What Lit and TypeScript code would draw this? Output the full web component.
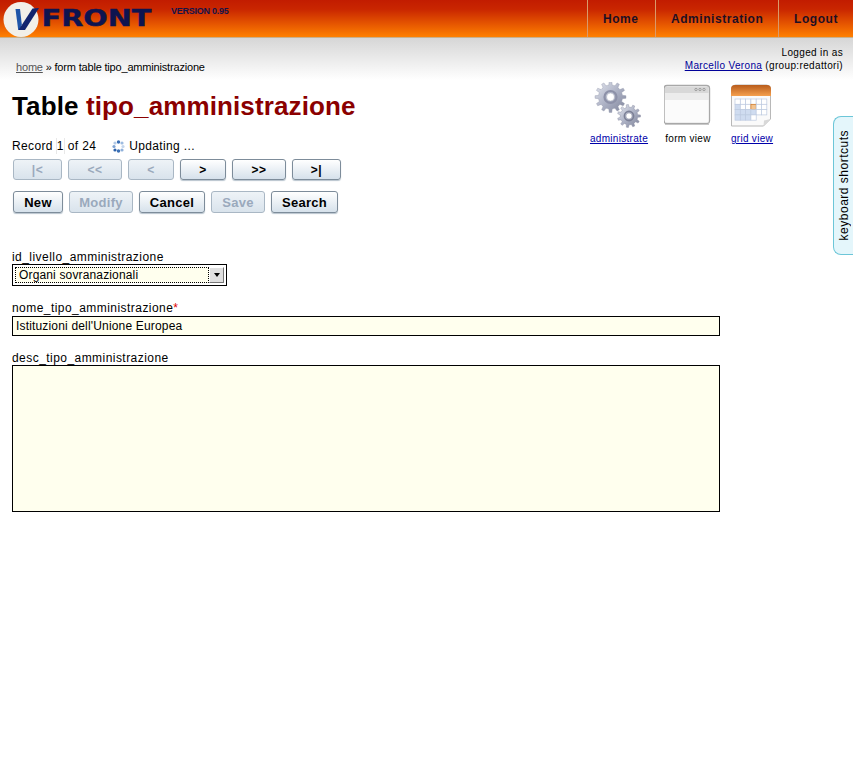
import { LitElement, html, css, svg } from "lit";
import { customElement } from "lit/decorators.js";

function gearPath(cx: number, cy: number, ro: number, ri: number, teeth: number, hole: number) {
  let d = "";
  const step = (Math.PI * 2) / teeth;
  for (let i = 0; i < teeth; i++) {
    const a = i * step;
    const pts: [number, number][] = [
      [ri, a - step * 0.5], [ri, a - step * 0.27], [ro, a - step * 0.16], [ro, a + step * 0.16], [ri, a + step * 0.27],
    ];
    for (const [r, t] of pts) {
      d += `${d ? "L" : "M"}${(cx + r * Math.cos(t)).toFixed(2)} ${(cy + r * Math.sin(t)).toFixed(2)}`;
    }
  }
  d += `Z M${cx - hole} ${cy}a${hole} ${hole} 0 1 0 ${hole * 2} 0a${hole} ${hole} 0 1 0 ${-hole * 2} 0Z`;
  return d;
}

@customElement("app-root")
export class AppRoot extends LitElement {
  static styles = css`
    :host {
      display: block;
      position: relative;
      width: 853px;
      min-height: 784px;
      background: #fff;
      font-family: "Liberation Sans", Arial, sans-serif;
      font-size: 12px;
      color: #000;
      overflow: hidden;
    }
    .hdr {
      height: 37px;
      border-bottom: 1px solid #c9b08c;
      background: linear-gradient(#c21c00, #c92600 25%, #ff8000);
      display: flex;
      align-items: stretch;
    }
    .logo { flex: none; width: 160px; height: 37px; display: block; }
    .ver {
      flex: 1;
      padding: 6px 0 0 11px;
      font-size: 9px;
      line-height: 11px;
      font-weight: bold;
      letter-spacing: -0.25px;
      color: #14144a;
    }
    .nav { display: flex; }
    .nav a {
      display: flex;
      align-items: center;
      border-left: 1px solid #d99a6a;
      font-size: 12px;
      font-weight: bold;
      letter-spacing: 0.55px;
      color: #1e0f24;
      padding: 0 15px;
      white-space: nowrap;
    }
    .nav a.h { width: 37px; }
    .nav a.ad { width: 92px; }
    .nav a.lo { width: 45px; padding-right: 14px; }
    .page {
      background: linear-gradient(#d6d6d6, #fff) top / 100% 42px no-repeat;
    }
    .sub {
      height: 44px;
      box-sizing: border-box;
      padding: 8px 10px 0 16px;
      display: flex;
      justify-content: space-between;
      align-items: flex-start;
    }
    .crumb { margin-top: 15px; font-size: 11px; line-height: 13px; letter-spacing: -0.18px; }
    .crumb a { color: #555; text-decoration: underline; }
    .who { text-align: right; font-size: 10px; line-height: 13px; letter-spacing: 0.35px; }
    .who a { color: #000099; text-decoration: underline; }
    .top { display: flex; align-items: flex-start; }
    .left { width: 590px; box-sizing: border-box; padding: 9px 0 0 12px; flex: none; }
    h1 { margin: 0; font-size: 26px; line-height: 30px; font-weight: bold; letter-spacing: 0.12px; }
    h1 span { color: #8b0000; }
    .rec { display: flex; align-items: center; height: 16px; margin-top: 17px; line-height: 16px; letter-spacing: 0.35px; }
    .recnum { border: 1px solid #e8e8e8; border-width: 0 1px; margin: 0 3px 0 3px; width: 7px; text-align: center; }
    .spin { margin: 0 4px 0 16px; width: 13px; height: 13px; flex: none; }
    .btns { display: flex; }
    .b1 { gap: 6px; margin: 5px 0 0 1px; }
    .b2 { gap: 6px; margin: 11px 0 0 1px; }
    .btn {
      box-sizing: border-box;
      border: 1px solid #7d8c9a;
      border-radius: 3px;
      background: linear-gradient(#fff, #d6e1eb);
      box-shadow: 0 1px 1px #b8c4ce;
      display: flex;
      align-items: center;
      justify-content: center;
      font-weight: bold;
      color: #000;
    }
    .b1 .btn { height: 21px; font-size: 12px; letter-spacing: 0.6px; }
    .b2 .btn { height: 22px; font-size: 13px; letter-spacing: 0.3px; }
    .btn.off { color: #9aa9bc; border-color: #a9b7c4; background: linear-gradient(#eef3f7, #d9e3ec); box-shadow: none; }
    .views { display: flex; align-items: flex-start; }
    .view { display: flex; flex-direction: column; align-items: center; font-size: 10px; line-height: 11px; letter-spacing: 0.3px; color: #000; white-space: nowrap; }
    .view svg { display: block; height: 51px; }
    .view a { color: #0000aa; text-decoration: underline; }
    .v1 { width: 58px; }
    .v2 { width: 56px; margin-left: 12px; }
    .v3 { width: 44px; margin-left: 14px; }
    .form { padding: 36px 0 0 12px; width: 708px; }
    .lab { line-height: 14px; letter-spacing: 0.45px; margin-bottom: 0; padding-top: 1px; }
    .lab i { color: #d00; font-style: normal; }
    .sel {
      box-sizing: border-box;
      width: 215px;
      height: 22px;
      border: 1px solid #000;
      background: #fff;
      padding: 2px;
      margin-bottom: 14px;
      display: flex;
    }
    .seltxt {
      flex: 1;
      border: 1px dotted #000;
      background: #ffffee;
      padding: 0 0 0 3px;
      line-height: 14px;
      letter-spacing: 0.15px;
    }
    .selbtn {
      flex: none;
      width: 15px;
      background: #dfdfdf;
      border: 1px solid;
      border-color: #fff #777 #777 #fff;
      box-sizing: border-box;
      display: flex;
      align-items: center;
      justify-content: center;
    }
    .selbtn b { width: 0; height: 0; border: 3px solid transparent; border-top: 4px solid #000; border-bottom: 0; }
    input, textarea {
      display: block;
      box-sizing: border-box;
      width: 708px;
      border: 1px solid #000;
      background: #ffffee;
      font: 12px "Liberation Sans", Arial, sans-serif;
      color: #000;
      margin: 0;
      outline: none;
      border-radius: 0;
    }
    input { height: 20px; padding: 0 3px; margin: 1px 0 14px; letter-spacing: 0.17px; }
    textarea { height: 147px; padding: 2px 3px; resize: none; }
    .kbd {
      position: absolute;
      top: 116px;
      right: 0;
      width: 20px;
      height: 139px;
      box-sizing: border-box;
      border: 1px solid #6cc6d8;
      border-right: 0;
      border-radius: 8px 0 0 8px;
      background: #e4f6fb;
      display: flex;
      align-items: center;
      justify-content: center;
    }
    .kbd span {
      writing-mode: vertical-rl;
      transform: rotate(180deg);
      font-size: 12px;
      letter-spacing: 0.5px;
      white-space: nowrap;
    }
  `;

  private logo() {
    return html`<svg class="logo" viewBox="0 0 160 37" aria-hidden="true">
      <circle cx="21" cy="19.5" r="17.5" fill="#f2efe8"/>
      <path d="M15.5 9h4.5l1.8 15.5L20 30h-1.8z" fill="#1f55a8"/>
      <path d="M18.5 30l14-21.5L39 8 25 30z" fill="#12246e"/>
      <text x="41.5" y="26" font-family="DejaVu Sans" font-weight="bold" font-size="23.5" fill="#0e1450" stroke="#0e1450" stroke-width="0.4" textLength="110" lengthAdjust="spacingAndGlyphs">FRONT</text>
    </svg>`;
  }

  private gears() {
    return html`<svg width="58" height="51" viewBox="590 82 58 51" aria-hidden="true">
      <defs>
        <linearGradient id="gr" x1="0" y1="0" x2="1" y2="1"><stop offset="0" stop-color="#e4e7ef"/><stop offset=".5" stop-color="#aeb3c6"/><stop offset="1" stop-color="#7d8298"/></linearGradient>
      </defs>
      <path d="${gearPath(610.5, 97, 15.5, 12, 12, 4)}" fill="url(#gr)" fill-rule="evenodd" stroke="#9094aa" stroke-width=".4"/>
      <circle cx="610.5" cy="97" r="6" fill="none" stroke="#8d91a8" stroke-width="2.2"/>
      <path d="${gearPath(629, 116, 11.5, 8.8, 11, 3)}" fill="url(#gr)" fill-rule="evenodd" stroke="#80849a" stroke-width=".4"/>
      <circle cx="629" cy="116" r="4.6" fill="none" stroke="#7c8096" stroke-width="1.6"/>
    </svg>`;
  }

  private formIcon() {
    return html`<svg width="48" height="51" viewBox="664 82 48 51" aria-hidden="true">
      <rect x="664" y="85.5" width="45.5" height="38" rx="3" fill="#f4f4f4" stroke="#a8a8a8" stroke-width="1.4"/>
      <rect x="665" y="87" width="43.5" height="6" fill="#d8d8d8"/>
      <rect x="665" y="93" width="43.5" height="7" fill="#ececec"/>
      <rect x="665" y="100" width="43.5" height="22.5" fill="#fbfbfb"/>
      <g fill="none" stroke="#8a8a8a" stroke-width=".7"><circle cx="696" cy="89.5" r="1.2"/><circle cx="700" cy="89.5" r="1.2"/><circle cx="704" cy="89.5" r="1.2"/></g>
      <path d="M665 124.5h44" stroke="#c8c8c8"/>
    </svg>`;
  }

  private gridIcon() {
    const x0 = 735, y0 = 99, s = 5.3;
    const cells = [];
    for (let r = 0; r < 4; r++) for (let c = 0; c < 6; c++) {
      const blue = (r >= 1 && c === 0) || (r >= 2 && c === 1) || (r === 2 && c <= 3) || (r === 3 && c <= 2);
      if (r === 3 && c > 3) continue;
      const fill = r === 1 && c === 3 ? "#f3c490" : blue ? "#cfdcf0" : "#fff";
      const st = r === 1 && c === 3 ? "#d2751c" : "#bdcae0";
      cells.push(svg`<rect x="${x0 + c * s}" y="${y0 + r * s}" width="${s}" height="${s}" fill="${fill}" stroke="${st}" stroke-width=".7"/>`);
    }
    return html`<svg width="44" height="51" viewBox="730 82 44 51" aria-hidden="true">
      <defs><linearGradient id="or" x1="0" y1="0" x2="0" y2="1"><stop offset="0" stop-color="#b85c1c"/><stop offset="1" stop-color="#f5a04e"/></linearGradient></defs>
      <path d="M731.5 89q0-4 4-4h31q4 0 4 4v30l-7 7h-32z" fill="#fafafa" stroke="#b8b8b8" stroke-width="1"/>
      <path d="M731 89q0-4 4-4h32q4 0 4 4v7h-40z" fill="url(#or)"/>
      ${cells}
      <path d="M763.5 126l7-7-6.5 1.5z" fill="#d8d8d8"/>
    </svg>`;
  }

  render() {
    const nav1 = [["|<", 49, 1], ["<<", 54, 1], ["<", 46, 1], [">", 46, 0], [">>", 54, 0], [">|", 49, 0]] as const;
    const nav2 = [["New", 50, 0], ["Modify", 64, 1], ["Cancel", 66, 0], ["Save", 54, 1], ["Search", 67, 0]] as const;
    return html`
      <div class="hdr">
        ${this.logo()}
        <div class="ver">VERSION 0.95</div>
        <nav class="nav">
          <a class="h">Home</a><a class="ad">Administration</a><a class="lo">Logout</a>
        </nav>
      </div>
      <div class="page">
        <div class="sub">
          <div class="crumb"><a>home</a> » form table tipo_amministrazione</div>
          <div class="who">Logged in as<br /><a>Marcello Verona</a> (group:redattori)</div>
        </div>
        <div class="top">
          <div class="left">
            <h1>Table <span>tipo_amministrazione</span></h1>
            <div class="rec">
              Record <span class="recnum">1</span> of 24
              <svg class="spin" viewBox="0 0 13 13" aria-hidden="true">
                <g fill="#3a6fb5">
                  <circle cx="6.5" cy="2" r="1.7"/><circle cx="10" cy="3" r="1.6" fill="#9dbbe0"/><circle cx="11" cy="6.5" r="1.6" fill="#c4d6ec"/>
                  <circle cx="10" cy="10" r="1.6" fill="#8fb0da"/><circle cx="6.5" cy="11" r="1.7"/><circle cx="3" cy="10" r="1.6" fill="#2d62ab"/>
                  <circle cx="2" cy="6.5" r="1.6" fill="#7fa3d3"/><circle cx="3" cy="3" r="1.6" fill="#b3cae6"/>
                </g>
              </svg>
              Updating ...
            </div>
            <div class="btns b1">
              ${nav1.map(([t, w, off]) => html`<div class="btn ${off ? "off" : ""}" style="width:${w}px">${t}</div>`)}
            </div>
            <div class="btns b2">
              ${nav2.map(([t, w, off]) => html`<div class="btn ${off ? "off" : ""}" style="width:${w}px">${t}</div>`)}
            </div>
          </div>
          <div class="views">
            <div class="view v1">${this.gears()}<a>administrate</a></div>
            <div class="view v2">${this.formIcon()}<span>form view</span></div>
            <div class="view v3">${this.gridIcon()}<a>grid view</a></div>
          </div>
        </div>
        <div class="form">
          <div class="lab">id_livello_amministrazione</div>
          <div class="sel"><div class="seltxt">Organi sovranazionali</div><div class="selbtn"><b></b></div></div>
          <div class="lab">nome_tipo_amministrazione<i>*</i></div>
          <input value="Istituzioni dell'Unione Europea" />
          <div class="lab">desc_tipo_amministrazione</div>
          <textarea></textarea>
        </div>
      </div>
      <div class="kbd"><span>keyboard shortcuts</span></div>
    `;
  }
}
